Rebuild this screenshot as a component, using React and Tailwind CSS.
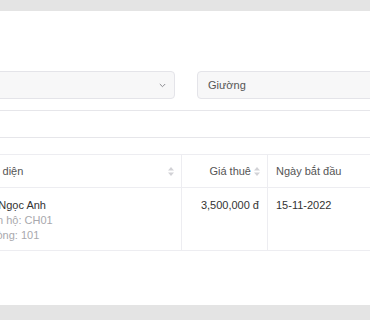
import React from 'react'

function SortIcon() {
    return (
        <svg width="6" height="9" viewBox="0 0 6 9" className="shrink-0">
            <path d="M3 0 L6 3.5 L0 3.5 Z" fill="#d2d2d6" />
            <path d="M3 9 L6 5.5 L0 5.5 Z" fill="#d2d2d6" />
        </svg>
    )
}

function Chevron() {
    return (
        <svg width="7" height="5" viewBox="0 0 7 5" fill="none">
            <path d="M0.8 1 L3.5 3.7 L6.2 1" stroke="#8a8a90" strokeWidth="1" />
        </svg>
    )
}

export default function App() {
    return (
        <div className="w-[370px] h-[320px] bg-[#e4e4e4] overflow-hidden pt-[11px] font-['Liberation_Sans',Arial,sans-serif] text-[11px]">
            <div className="bg-white h-[294px] overflow-hidden">
                <div className="ml-[-30px] w-[432px] pt-[60px]">
                    {/* Filters */}
                    <div className="grid grid-cols-2 gap-[22px]">
                        <div className="h-[28px] rounded-[4px] border border-[#e4e4e9] bg-[#f7f7f8] flex items-center justify-end pr-[8px]">
                            <Chevron />
                        </div>
                        <div className="h-[28px] rounded-[4px] border border-[#e4e4e9] bg-[#f7f7f8] flex items-center pl-[10px] text-[#555]">
                            Giường
                        </div>
                    </div>

                    {/* Search row */}
                    <div className="mt-[11px] h-[28px] border border-[#e6e6ea] bg-white" />

                    {/* Table */}
                    <div className="mt-[16px] w-[420px] border-t border-[#ededf1]">
                        <div className="grid grid-cols-[212px_86px_122px] h-[33px] border-b border-[#ededf1] text-[#555]">
                            <div className="flex items-center justify-between pl-[13px] pr-[7px] border-r border-[#ededf1]">
                                <span>Đại diện</span>
                                <SortIcon />
                            </div>
                            <div className="flex items-center justify-end gap-[3px] pr-[7px] border-r border-[#ededf1]">
                                <span>Giá thuê</span>
                                <SortIcon />
                            </div>
                            <div className="flex items-center justify-between pl-[8px] pr-[9px]">
                                <span>Ngày bắt đầu</span>
                                <SortIcon />
                            </div>
                        </div>
                        <div className="grid grid-cols-[212px_86px_122px] h-[63px] border-b border-[#ededf1]">
                            <div className="pl-[13px] pt-[10px] leading-[15px] border-r border-[#ededf1]">
                                <p className="text-[#333]">Lê Ngọc Anh</p>
                                <p className="text-[#a8a8ad]">Căn hộ: CH01</p>
                                <p className="text-[#a8a8ad]">Phòng: 101</p>
                            </div>
                            <div className="pt-[10px] pr-[8px] leading-[15px] text-right text-[#333] border-r border-[#ededf1]">
                                3,500,000 đ
                            </div>
                            <div className="pt-[10px] pl-[8px] leading-[15px] text-[#333]">
                                15-11-2022
                            </div>
                        </div>
                    </div>
                </div>
            </div>
        </div>
    )
}
